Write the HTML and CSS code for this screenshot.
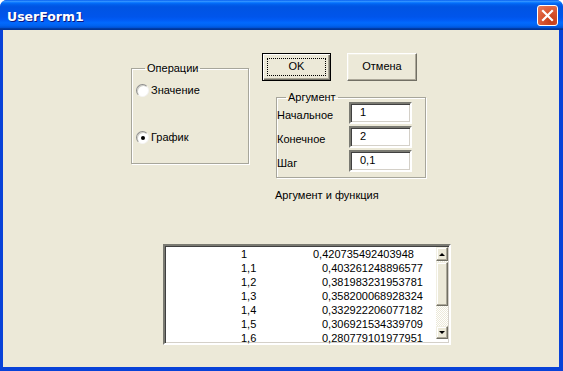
FILE: index.html
```html
<!DOCTYPE html>
<html lang="ru">
<head>
<meta charset="utf-8">
<title>UserForm1</title>
<link rel="stylesheet" href="styles.css">
</head>
<body>
<div class="window">
  <div class="titlebar">
    <span class="title">UserForm1</span>
    <span class="close">
      <svg width="13" height="13" viewBox="0 0 13 13"><path d="M2 2 L11 11 M11 2 L2 11" stroke="#fff" stroke-width="2.2" stroke-linecap="square"/></svg>
    </span>
  </div>
  <div class="client">
    <div class="top-row">
      <fieldset class="frame ops">
        <legend>Операции</legend>
        <div class="radio first"><span class="rb"></span><span>Значение</span></div>
        <div class="radio second"><span class="rb checked"></span><span>График</span></div>
      </fieldset>
      <div class="right">
        <div class="buttons">
          <div class="btn default"><span class="focus">OK</span></div>
          <div class="btn cancel">Отмена</div>
        </div>
        <fieldset class="frame arg">
          <legend>Аргумент</legend>
          <div class="field"><span class="lbl">Начальное</span><span class="tb">1</span></div>
          <div class="field"><span class="lbl">Конечное</span><span class="tb">2</span></div>
          <div class="field"><span class="lbl">Шаг</span><span class="tb">0,1</span></div>
        </fieldset>
        <div class="caption">Аргумент и функция</div>
      </div>
    </div>
    <div class="listbox">
      <div class="rows">
        <div class="row first"><span class="c1">1</span><span class="c2">0,420735492403948</span></div>
        <div class="row"><span class="c1">1,1</span><span class="c2">0,403261248896577</span></div>
        <div class="row"><span class="c1">1,2</span><span class="c2">0,381983231953781</span></div>
        <div class="row"><span class="c1">1,3</span><span class="c2">0,358200068928324</span></div>
        <div class="row"><span class="c1">1,4</span><span class="c2">0,332922206077182</span></div>
        <div class="row"><span class="c1">1,5</span><span class="c2">0,306921534339709</span></div>
        <div class="row"><span class="c1">1,6</span><span class="c2">0,280779101977951</span></div>
      </div>
      <div class="scrollbar">
        <div class="sb-btn up"><span class="arrow-up"></span></div>
        <div class="sb-track small"></div>
        <div class="sb-thumb"></div>
        <div class="sb-track"></div>
        <div class="sb-btn down"><span class="arrow-down"></span></div>
      </div>
    </div>
  </div>
</div>
</body>
</html>
```
FILE: styles.css
```css
* { box-sizing: border-box; }
html, body { margin: 0; padding: 0; background: #fff; }
body {
  font-family: "Liberation Sans", Arial, sans-serif;
  font-size: 11px;
  line-height: 13px;
  color: #000;
}
.window {
  width: 563px;
  height: 371px;
  background: #0842d8;
  border-radius: 7px 7px 0 0;
  display: flex;
  flex-direction: column;
  overflow: hidden;
}
.titlebar {
  height: 30px;
  flex: none;
  display: flex;
  align-items: center;
  justify-content: space-between;
  padding: 0 5px 0 7px;
  background: linear-gradient(to bottom, #0058ee 0%, #3593ff 4%, #288eff 6%, #127dff 8%, #036ffc 10%, #0262ee 14%, #0057e5 20%, #0054e3 24%, #0055eb 56%, #005bf5 66%, #026afe 76%, #0062ef 86%, #0052d6 92%, #0040ab 94%, #003092 100%);
}
.title {
  font-family: "DejaVu Sans", "Liberation Sans", sans-serif;
  font-weight: bold;
  font-size: 12.5px;
  color: #fff;
  text-shadow: 1px 1px #0a1883;
  margin-top: 2px;
}
.close {
  width: 21px;
  height: 21px;
  border: 1px solid #fff;
  border-radius: 3px;
  background: radial-gradient(circle at 70% 80%, #c43c16 0%, #d8542e 45%, #e97c5e 100%);
  display: flex;
  align-items: center;
  justify-content: center;
  margin-top: 1px;
}
.client {
  flex: 1;
  margin: 0 4px 4px 3px;
  background: #ece9d8;
}
.top-row {
  display: flex;
  align-items: flex-start;
  padding: 23px 0 0 128px;
}
.frame {
  margin: 0;
  padding: 0;
  min-width: 0;
  border: 1px solid #a7a69b;
  box-shadow: inset 1px 1px #fff, 1px 1px #fff;
}
.frame legend {
  padding: 0 2px;
  line-height: 12px;
}
.ops {
  width: 118px;
  margin-top: 9px;
  padding: 0 0 19px 4px;
}
.ops legend { margin-left: 9px; }
.radio {
  display: flex;
  align-items: center;
  gap: 2px;
  height: 13px;
}
.radio.first { margin-top: 10px; }
.radio.second { margin-top: 34px; }
.rb {
  width: 13px;
  height: 13px;
  border-radius: 50%;
  background: #fff;
  border: 1px solid;
  border-color: #8d8d8d #f4f4f4 #f4f4f4 #8d8d8d;
  box-shadow: inset 1px 1px #d0d0c8;
  display: flex;
  align-items: center;
  justify-content: center;
}
.rb.checked::after {
  content: "";
  width: 4px;
  height: 4px;
  border-radius: 50%;
  background: #000;
}
.right {
  margin-left: 13px;
  display: flex;
  flex-direction: column;
}
.buttons {
  display: flex;
  gap: 16px;
}
.btn {
  width: 70px;
  height: 28px;
  background: #ece9d8;
  border: 1px solid;
  border-color: #fff #716f64 #716f64 #fff;
  box-shadow: inset -1px -1px #aca899, inset 1px 1px #f1efe2;
  display: flex;
  align-items: center;
  justify-content: center;
  padding-bottom: 1px;
}
.btn.default {
  width: 69px;
  border: 1px solid #000;
  box-shadow: inset 1px 1px #fff, inset -1px -1px #716f64, inset -2px -2px #aca899;
  padding: 4px;
}
.btn .focus {
  flex: 1;
  align-self: stretch;
  border: 1px dotted #000;
  display: flex;
  align-items: center;
  justify-content: center;
  padding-bottom: 1px;
}
.arg {
  width: 150px;
  margin: 10px 0 0 14px;
  padding: 0 0 5px 0;
}
.arg legend { margin-left: 9px; }
.field {
  display: flex;
  height: 22px;
  margin-top: 2px;
}
.field:first-of-type { margin-top: -1px; }
.lbl {
  width: 72px;
  padding-top: 7px;
}
.tb {
  width: 63px;
  height: 22px;
  background: #fff;
  border: 2px solid;
  border-color: #7a7a72 #fff #fff #7a7a72;
  box-shadow: inset 1px 1px #404040, inset -1px -1px #d4d0c8;
  padding: 2px 0 0 9px;
}
.caption {
  margin: 11px 0 0 13px;
}
.listbox {
  margin: 42px 0 0 160px;
  width: 288px;
  height: 101px;
  background: #fff;
  border: 2px solid;
  border-color: #7a7a72 #fff #fff #7a7a72;
  box-shadow: inset 1px 1px #404040, inset -1px -1px #d4d0c8;
  display: flex;
}
.rows {
  flex: 1;
  padding: 1px 0 0 76px;
}
.row {
  display: flex;
  height: 14px;
  line-height: 14px;
}
.c1 { width: 81px; }
.row.first .c2 { margin-left: -9px; }
.scrollbar {
  width: 12px;
  margin: 1px 1px 0 0;
  display: flex;
  flex-direction: column;
  align-self: flex-start;
}
.sb-btn, .sb-thumb {
  background: #ece9d8;
  border: 1px solid;
  border-color: #f1efe2 #716f64 #716f64 #f1efe2;
  box-shadow: inset -1px -1px #aca899, inset 1px 1px #fff;
  display: flex;
  align-items: center;
  justify-content: center;
}
.sb-btn.up { height: 14px; }
.sb-btn.down { height: 13px; }
.sb-thumb { height: 44px; }
.sb-track {
  height: 20px;
  background: repeating-conic-gradient(#fff 0 25%, #ece9d8 0 50%) 0 0 / 2px 2px;
}
.sb-track.small { height: 1px; }
.arrow-up {
  width: 0; height: 0;
  border-left: 3px solid transparent;
  border-right: 3px solid transparent;
  border-bottom: 3px solid #000;
}
.arrow-down {
  width: 0; height: 0;
  border-left: 3px solid transparent;
  border-right: 3px solid transparent;
  border-top: 3px solid #000;
}
```
